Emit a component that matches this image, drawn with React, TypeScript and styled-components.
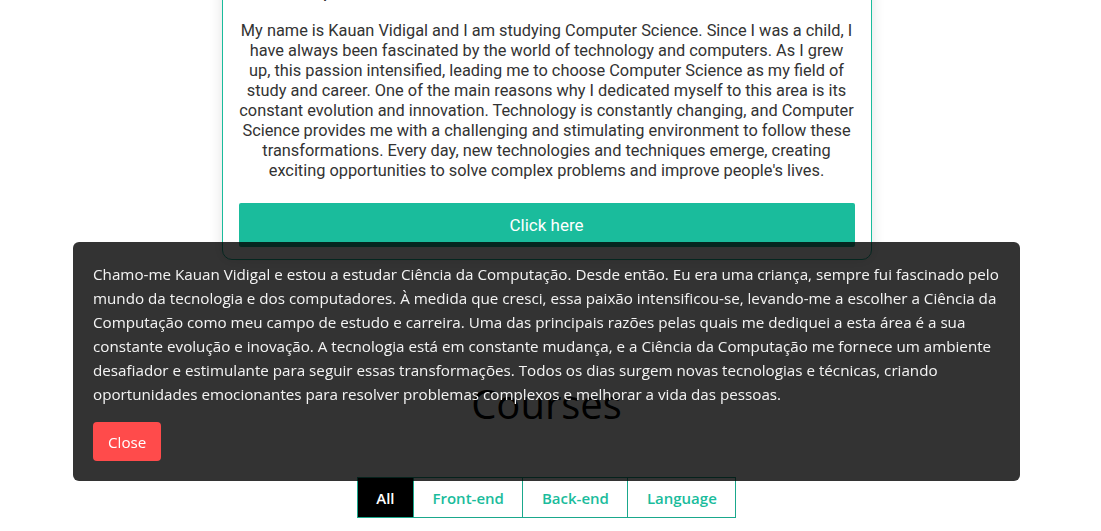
import React from "react";
import styled, { createGlobalStyle } from "styled-components";

const GlobalStyle = createGlobalStyle`
  html, body {
    margin: 0;
    padding: 0;
    background: #ffffff;
    overflow: hidden;
  }
  * { box-sizing: border-box; }
`;

const Page = styled.main`
  width: 1093px;
  display: flex;
  flex-direction: column;
  align-items: center;
`;

const AboutCard = styled.section`
  width: 650px;
  margin-top: -40px;
  padding: 16px 16px 12px;
  border: 1px solid #1abc9c;
  border-radius: 10px;
  background: #ffffff;
  box-shadow: 0 0 14px rgba(0, 0, 0, 0.12);
  font-family: Roboto, "Liberation Sans", sans-serif;
`;

const CardTitle = styled.h3`
  margin: 0;
  padding-left: 28px;
  font-size: 20px;
  line-height: 26px;
  font-weight: 400;
  color: #333;
  text-align: left;
`;

const AboutText = styled.p`
  margin: 18px 0 22px;
  font-size: 16.35px;
  line-height: 20px;
  color: #333333;
  text-align: center;
`;

const PrimaryButton = styled.button`
  display: block;
  width: 100%;
  height: 44px;
  border: none;
  border-radius: 2px;
  background: #1abc9c;
  color: #ffffff;
  font-family: Roboto, "Liberation Sans", sans-serif;
  font-size: 17px;
  cursor: pointer;
`;

const CoursesSection = styled.section`
  margin-top: 120px;
  display: flex;
  flex-direction: column;
  align-items: center;
  font-family: "Open Sans", "Noto Sans", sans-serif;
`;

const SectionTitle = styled.h2`
  margin: 0;
  font-size: 40px;
  line-height: 48px;
  font-weight: 400;
  color: #000000;
`;

const TabBar = styled.div`
  margin-top: 49px;
  display: flex;
  border: 1px solid #1aa88c;
`;

const Tab = styled.button<{ $active?: boolean }>`
  height: 39px;
  padding: 0 18.5px;
  border: none;
  border-right: 1px solid #1aa88c;
  background: ${(p) => (p.$active ? "#000000" : "#ffffff")};
  color: ${(p) => (p.$active ? "#ffffff" : "#1abc9c")};
  font-family: "Open Sans", "Noto Sans", sans-serif;
  font-size: 15px;
  font-weight: 600;
  cursor: pointer;
  &:last-child { border-right: none; }
`;

const Modal = styled.div`
  position: fixed;
  left: 73px;
  top: 242px;
  width: 947px;
  padding: 20px;
  border-radius: 6px;
  background: rgba(0, 0, 0, 0.8);
  font-family: "Open Sans", "Noto Sans", sans-serif;
`;

const ModalText = styled.p`
  margin: 0;
  font-size: 15.2px;
  line-height: 24px;
  color: #f4f4f4;
`;

const CloseButton = styled.button`
  margin-top: 16px;
  height: 39px;
  padding: 0 15px;
  border: none;
  border-radius: 4px;
  background: #ff4b4b;
  color: #ffffff;
  font-family: "Open Sans", "Noto Sans", sans-serif;
  font-size: 15.2px;
  cursor: pointer;
`;

const tabs = ["All", "Front-end", "Back-end", "Language"];

export default function App() {
  return (
    <>
      <GlobalStyle />
      <Page>
        <AboutCard>
          <CardTitle>Description</CardTitle>
          <AboutText>
            My name is Kauan Vidigal and I am studying Computer Science. Since I was a child, I have always been
            fascinated by the world of technology and computers. As I grew up, this passion intensified, leading me
            to choose Computer Science as my field of study and career. One of the main reasons why I dedicated
            myself to this area is its constant evolution and innovation. Technology is constantly changing, and
            Computer Science provides me with a challenging and stimulating environment to follow these
            transformations. Every day, new technologies and techniques emerge, creating exciting opportunities to
            solve complex problems and improve people's lives.
          </AboutText>
          <PrimaryButton>Click here</PrimaryButton>
        </AboutCard>
        <CoursesSection>
          <SectionTitle>Courses</SectionTitle>
          <TabBar>
            {tabs.map((t, i) => (
              <Tab key={t} $active={i === 0}>
                {t}
              </Tab>
            ))}
          </TabBar>
        </CoursesSection>
      </Page>
      <Modal>
        <ModalText>
          Chamo-me Kauan Vidigal e estou a estudar Ciência da Computação. Desde então. Eu era uma criança, sempre fui
          fascinado pelo mundo da tecnologia e dos computadores. À medida que cresci, essa paixão intensificou-se,
          levando-me a escolher a Ciência da Computação como meu campo de estudo e carreira. Uma das principais razões
          pelas quais me dediquei a esta área é a sua constante evolução e inovação. A tecnologia está em constante
          mudança, e a Ciência da Computação me fornece um ambiente desafiador e estimulante para seguir essas
          transformações. Todos os dias surgem novas tecnologias e técnicas, criando oportunidades emocionantes para
          resolver problemas complexos e melhorar a vida das pessoas.
        </ModalText>
        <CloseButton>Close</CloseButton>
      </Modal>
    </>
  );
}
